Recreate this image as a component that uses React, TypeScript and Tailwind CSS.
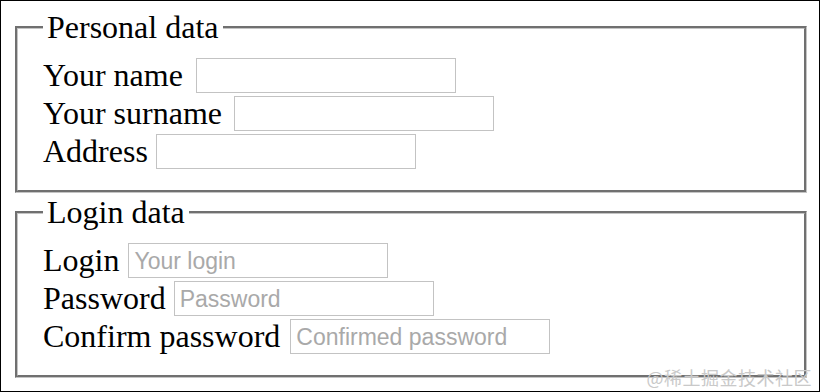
import React from "react";

const serif = "font-['Liberation_Serif','Times_New_Roman',serif]";

interface FieldProps {
  label: string;
  placeholder?: string;
  gap?: string;
}

const Field: React.FC<FieldProps> = ({ label, placeholder, gap = "gap-[8px]" }) => {
  return (
    <div className={`flex items-center h-[38px] ${gap}`}>
      <span className="text-[32px] text-black">{label}</span>
      <input
        type="text"
        placeholder={placeholder}
        className="w-[260px] h-[35px] border border-[#c3c3c3] bg-white px-[5px] pt-[2px] text-[23px] font-['Liberation_Sans',Arial,sans-serif] text-black placeholder:text-[#a9a9a9] outline-none"
      />
    </div>
  );
};

interface GroupProps {
  title: string;
  className?: string;
  children: React.ReactNode;
}

const Group: React.FC<GroupProps> = ({ title, className, children }) => {
  return (
    <fieldset
      className={
        "border-[3px] [border-style:groove] border-[#c4c4c4] px-[25px] pt-[11px] pb-[20px] " +
        (className ?? "")
      }
    >
      <legend className="px-[4px] text-[32px] leading-[36px] text-black">{title}</legend>
      {children}
    </fieldset>
  );
};

export default function App() {
  return (
    <div
      className={`relative w-[820px] h-[392px] overflow-hidden border border-black bg-white pt-[8px] pl-[14px] pr-[12px] ${serif}`}
    >
      <Group title="Personal data">
        <Field label="Your name" gap="gap-[13px]" />
        <Field label="Your surname" gap="gap-[12px]" />
        <Field label="Address" />
      </Group>
      <Group title="Login data" className="mt-[1px]">
        <Field label="Login" placeholder="Your login" gap="gap-[9px]" />
        <Field label="Password" placeholder="Password" />
        <Field label="Confirm password" placeholder="Confirmed password" gap="gap-[10px]" />
      </Group>
      <div className="absolute right-[7px] bottom-[3px] text-[18px] leading-[22px] tracking-[0.5px] text-[#c9c9c9] font-['Noto_Sans_CJK_SC',sans-serif]">
        @稀土掘金技术社区
      </div>
    </div>
  );
}
